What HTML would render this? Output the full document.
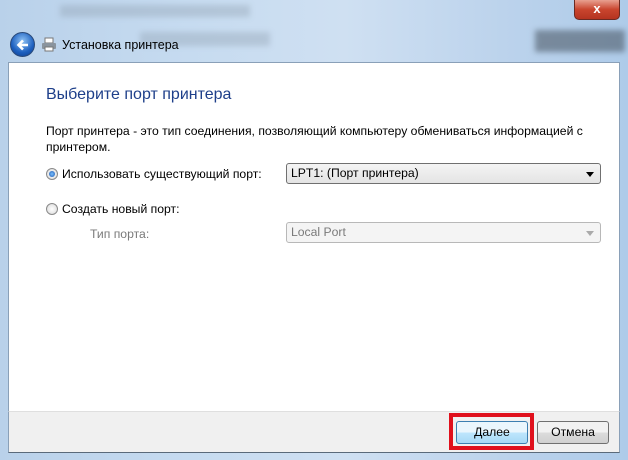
<!DOCTYPE html>
<html><head><meta charset="utf-8"><style>
*{margin:0;padding:0;box-sizing:border-box}
body{width:628px;height:460px;overflow:hidden;position:relative;font-family:"Liberation Sans","Noto Sans CJK SC",sans-serif;font-size:12.2px;color:#000;
background:linear-gradient(90deg,#b9d1ea 0%,#c6dbf0 30%,#cfe0f2 55%,#bcd3ec 80%,#aecbe9 100%);}
.blur{position:absolute;background:#8a9aaa;opacity:.35;filter:blur(3px)}
.t{position:absolute;white-space:nowrap}
.content{position:absolute;left:8px;top:62px;width:612px;height:391px;background:#fff;border:1px solid #8aa0b8}
.bottom{position:absolute;left:8px;top:411px;width:612px;height:42px;background:#f0f0f0;border-top:1px solid #dfdfdf;border-left:1px solid #8aa0b8;border-right:1px solid #8aa0b8;border-bottom:1px solid #5a6a7a}
.dd{position:absolute;left:286px;width:315px;height:21px;border:1px solid #707070;border-radius:3px;padding:0 4px;line-height:19px;background:linear-gradient(#f4f4f4,#e4e4e4)}
.btn{position:absolute;top:421px;height:23px;border:1px solid #707070;border-radius:3px;text-align:center;line-height:21px;background:linear-gradient(#f2f2f2 50%,#dcdcdc 50%,#d0d0d0)}
.radio{position:absolute;width:12px;height:12px;border-radius:50%;border:1px solid #8a8a8a;background:radial-gradient(#fff,#d8d8d8)}
</style></head><body>
<div class="blur" style="left:60px;top:5px;width:190px;height:12px"></div>
<div class="blur" style="left:140px;top:32px;width:130px;height:14px"></div>
<div class="blur" style="left:535px;top:30px;width:90px;height:22px;background:#3a4550;opacity:.5"></div>
<div style="position:absolute;left:574px;top:0;width:46px;height:20px;border:1px solid #6b2a22;border-top:none;border-radius:0 0 5px 5px;background:linear-gradient(#e8a090,#c9452e 50%,#b53320);color:#fff;font-weight:bold;text-align:center;font-size:13px;line-height:18px">x</div>
<div style="position:absolute;left:10px;top:32px;width:25px;height:25px;border-radius:50%;background:radial-gradient(circle at 50% 35%,#8fc3f5,#1c5fbf 60%,#0d3b8a);border:1px solid #2a4a7a"></div>
<svg style="position:absolute;left:14px;top:36px" width="18" height="18" viewBox="0 0 18 18"><path d="M14 9H5M9 4.5L4.5 9 9 13.5" stroke="#fff" stroke-width="2.6" fill="none"/></svg>
<svg style="position:absolute;left:41px;top:37px" width="16" height="15" viewBox="0 0 16 15"><rect x="4" y="1" width="8" height="5" fill="#fff" stroke="#777"/><rect x="1" y="6" width="14" height="6" rx="1" fill="#8a949e"/><rect x="4" y="10" width="8" height="4" fill="#fff" stroke="#777"/></svg>
<div class="t" style="left:62px;top:38px;font-size:12.5px">Установка принтера</div>
<div class="content"></div>
<div class="bottom"></div>
<div class="t" style="left:46px;top:86px;font-size:16px;color:#1e3f8a">Выберите порт принтера</div>
<div class="t" style="left:46px;top:124px">Порт принтера - это тип соединения, позволяющий компьютеру обмениваться информацией с</div>
<div class="t" style="left:46px;top:140px">принтером.</div>
<div class="radio" style="left:46px;top:168px"><div style="position:absolute;left:2px;top:2px;width:6px;height:6px;border-radius:50%;background:radial-gradient(#7ac0ff,#1a56b0)"></div></div>
<div class="t" style="left:62px;top:167px">Использовать существующий порт:</div>
<div class="dd" style="top:163px">LPT1: (Порт принтера)<span style="position:absolute;right:6px;top:8px;border:4px solid transparent;border-top:5px solid #000;border-bottom:none"></span></div>
<div class="radio" style="left:46px;top:203px"></div>
<div class="t" style="left:62px;top:202px">Создать новый порт:</div>
<div class="t" style="left:90px;top:227px;color:#7a7a7a">Тип порта:</div>
<div class="dd" style="top:222px;border-color:#b8b8b8;background:#f4f4f4;color:#7a7a7a">Local Port<span style="position:absolute;right:6px;top:8px;border:4px solid transparent;border-top:5px solid #aaa;border-bottom:none"></span></div>
<div style="position:absolute;left:449px;top:413px;width:85px;height:37px;border:4px solid #e0101c"></div>
<div class="btn" style="left:456px;width:72px;border-color:#3c7fb1;background:linear-gradient(#eaf6fd 50%,#bee6fd 50%,#a7d9f5)">Далее</div>
<div class="btn" style="left:537px;width:72px">Отмена</div>
</body></html>
